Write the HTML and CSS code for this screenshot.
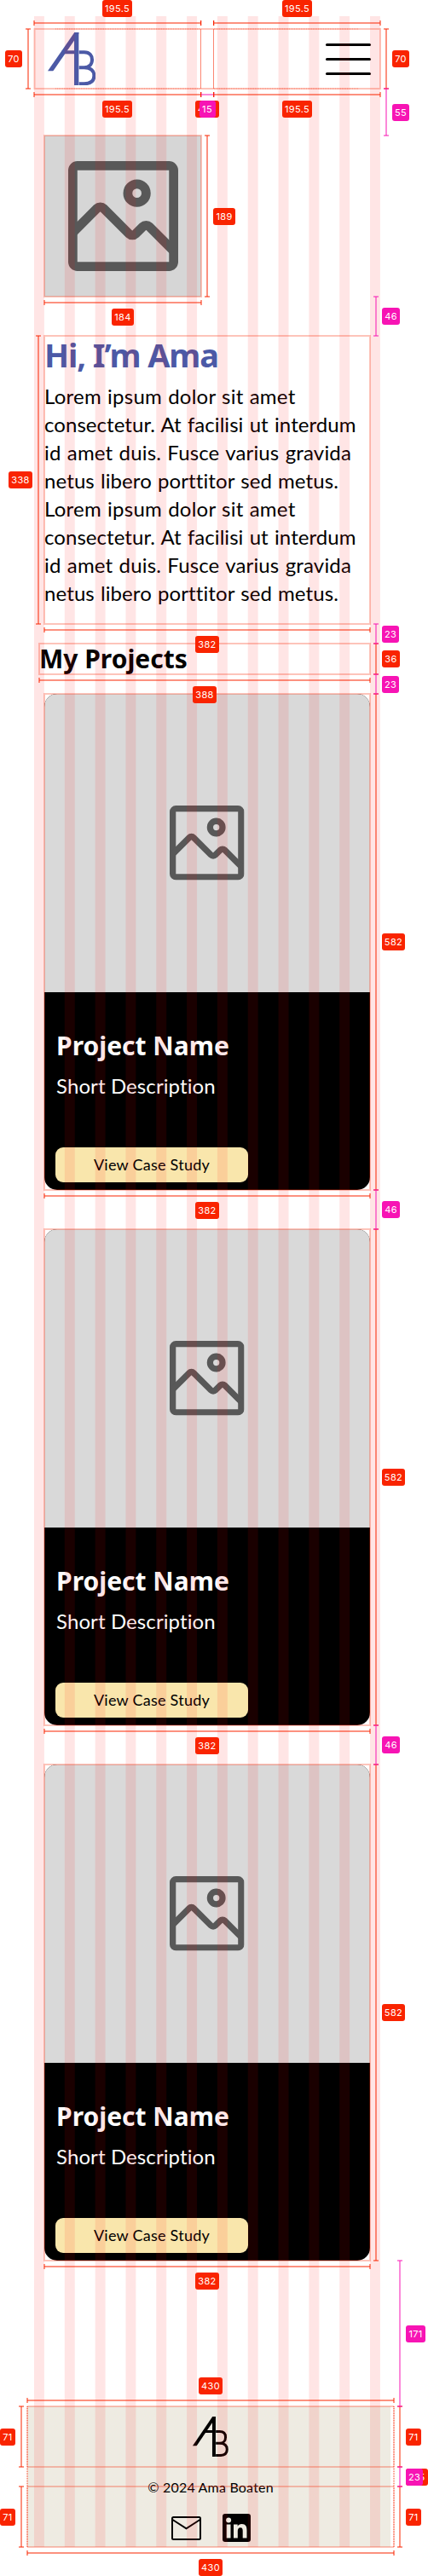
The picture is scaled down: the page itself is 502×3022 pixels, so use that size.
FILE: index.html
```html
<!DOCTYPE html>
<html lang="en">
<head>
<meta charset="utf-8">
<title>Ama Boaten</title>
<link rel="stylesheet" href="styles.css">
</head>
<body>
<svg class="defs" width="0" height="0">
  <symbol id="logo" viewBox="0 0 170 188" preserveAspectRatio="none">
    <clipPath id="leg"><rect x="0" y="0" width="109" height="136"/></clipPath>
    <g fill="none" stroke="currentColor" stroke-width="12">
      <path d="M-4.3 156L117.3 -20" stroke-width="15.6" clip-path="url(#leg)"/>
      <path d="M50 70H93"/>
      <path d="M101 0V187" stroke-width="16"/>
      <path d="M110 70H128C149 70 156 83 156 96C156 112 146 124 128 124H110M128 124C154 124 163 138 163 153C163 172 150 181 128 181H110"/>
    </g>
  </symbol>
  <symbol id="picture" viewBox="0 0 24 24">
    <g fill="none" stroke="currentColor" stroke-width="2">
      <rect x="1" y="1" width="22" height="22" rx="1"/>
      <circle cx="15" cy="7" r="2"/>
      <path d="M1 15.6L6.3 10.3a1 1 0 0 1 1.4 0L13.3 15.9a1 1 0 0 0 1.4 0L16.3 14.3a1 1 0 0 1 1.4 0L23 19.6"/>
    </g>
  </symbol>
</svg>

<div class="page">
  <header class="header">
    <svg class="logo"><use href="#logo"/></svg>
    <div class="menu"><span></span><span></span><span></span></div>
  </header>

  <main class="main">
    <div class="portrait"><svg class="portrait-icon"><use href="#picture"/></svg></div>
    <section class="intro">
      <h1 class="title">Hi, I’m Ama</h1>
      <p class="lead">
        <span class="l1">Lorem ipsum dolor sit amet</span>
        <span class="l2">consectetur. At facilisi ut interdum</span>
        <span class="l3">id amet duis. Fusce varius gravida</span>
        <span class="l4">netus libero porttitor sed metus.</span>
        <span class="l1">Lorem ipsum dolor sit amet</span>
        <span class="l2">consectetur. At facilisi ut interdum</span>
        <span class="l3">id amet duis. Fusce varius gravida</span>
        <span class="l4">netus libero porttitor sed metus.</span>
      </p>
    </section>
    <h2 class="section-title">My Projects</h2>
    <div class="cards">
      <article class="card">
        <div class="thumb"><svg class="thumb-icon"><use href="#picture"/></svg></div>
        <div class="info"><h3 class="name">Project Name</h3><p class="desc">Short Description</p><a class="button"><span>View Case Study</span></a></div>
      </article>
      <article class="card">
        <div class="thumb"><svg class="thumb-icon"><use href="#picture"/></svg></div>
        <div class="info"><h3 class="name">Project Name</h3><p class="desc">Short Description</p><a class="button"><span>View Case Study</span></a></div>
      </article>
      <article class="card">
        <div class="thumb"><svg class="thumb-icon"><use href="#picture"/></svg></div>
        <div class="info"><h3 class="name">Project Name</h3><p class="desc">Short Description</p><a class="button"><span>View Case Study</span></a></div>
      </article>
    </div>
  </main>

  <footer class="footer">
    <svg class="footer-logo"><use href="#logo"/></svg>
    <p class="copyright">© 2024 Ama Boaten</p>
    <div class="social">
      <svg class="mail" viewBox="0 0 35 28"><g fill="none" stroke="#000" stroke-width="2"><rect x="1" y="1" width="33" height="26" rx="1.5"/><path d="M1.5 4L17.5 14.3L33.500 4"/></g></svg>
      <svg class="linkedin" viewBox="0 0 33 33"><rect width="33" height="33" rx="3"/><g fill="#eeebe2"><circle cx="7.100" cy="7.600" r="3"/><rect x="4.700" y="12.500" width="4.800" height="16"/><path d="M13 12.500h4.700v2.200c.9-1.600 2.600-2.700 4.900-2.700 4.600 0 5.900 3 5.900 7.200v9.300h-4.800v-8.300c0-2.200-.3-4-2.700-4s-3.200 1.800-3.200 4v8.300H13z"/></g></svg>
    </div>
  </footer>
</div>

<div class="overlay">
  <svg class="guides" width="502" height="3022">
    <defs>
      <pattern id="columns" x="40" y="0" width="35.820" height="3022" patternUnits="userSpaceOnUse"><rect width="11.900" height="3022" fill="#f00" fill-opacity=".1"/></pattern>
      <marker id="tick" markerUnits="userSpaceOnUse" markerWidth="2" markerHeight="6" refX="1" refY="3" orient="auto"><rect width="2" height="6" fill="#f92400" fill-opacity=".5"/></marker>
      <marker id="tickPink" markerUnits="userSpaceOnUse" markerWidth="2" markerHeight="6" refX="1" refY="3" orient="auto"><rect width="2" height="6" fill="#f714b4" fill-opacity=".5"/></marker>
    </defs>
    <rect x="40" y="19" width="406" height="2969" fill="url(#columns)"/>
    <g fill="none" stroke="#f92400" stroke-opacity=".27" stroke-width="2">
      <rect x="40.500" y="34" width="405.500" height="70"/>
      <path d="M235.500 34V104M250.500 34V104" stroke-width="1" stroke-opacity=".55"/>
      <path d="M65 34H235M251 34H421M65 104H235M251 104H421" stroke-dasharray="1 1" stroke-width="1.500"/>
      <rect x="52" y="159" width="184" height="189"/>
      <rect x="52" y="394" width="382" height="338"/>
      <rect x="46" y="755" width="388" height="36"/>
      <rect x="52" y="814" width="382" height="582"/>
      <rect x="52" y="1442" width="382" height="582"/>
      <rect x="52" y="2070" width="382" height="582"/>
      <path d="M32 2823H462M32 2894H462M32 2917H462M32 2988H462"/>
      <path d="M32 2823V2894M462 2823V2894M32 2917V2988M462 2917V2988" stroke-opacity=".12"/>
      <path d="M32 2823V2988M462 2823V2988" stroke-dasharray="1 1" stroke-opacity=".5"/>
    </g>
    <g stroke="#f92400" stroke-opacity=".5" stroke-width="2" marker-start="url(#tick)" marker-end="url(#tick)">
      <line x1="40" y1="27" x2="235.500" y2="27"/><line x1="250.500" y1="27" x2="446" y2="27"/>
      <line x1="40" y1="111" x2="235.500" y2="111"/><line x1="250.500" y1="111" x2="446" y2="111"/>
      <line x1="33" y1="34" x2="33" y2="104"/><line x1="453" y1="34" x2="453" y2="104"/>
      <line x1="243" y1="159" x2="243" y2="348"/><line x1="52" y1="355" x2="236" y2="355"/>
      <line x1="45" y1="394" x2="45" y2="732"/><line x1="52" y1="739" x2="434" y2="739"/>
      <line x1="441" y1="755" x2="441" y2="791"/><line x1="46" y1="798" x2="434" y2="798"/>
      <line x1="441" y1="814" x2="441" y2="1396"/><line x1="52" y1="1403" x2="434" y2="1403"/>
      <line x1="441" y1="1442" x2="441" y2="2024"/><line x1="52" y1="2031" x2="434" y2="2031"/>
      <line x1="441" y1="2070" x2="441" y2="2652"/><line x1="52" y1="2659" x2="434" y2="2659"/>
      <line x1="32" y1="2816" x2="462" y2="2816"/><line x1="32" y1="2995" x2="462" y2="2995"/>
      <line x1="25" y1="2823" x2="25" y2="2894"/><line x1="25" y1="2917" x2="25" y2="2988"/>
      <line x1="469" y1="2823" x2="469" y2="2894"/><line x1="469" y1="2917" x2="469" y2="2988"/>
    </g>
    <g stroke="#f714b4" stroke-opacity=".5" stroke-width="2" marker-start="url(#tickPink)" marker-end="url(#tickPink)">
      <line x1="235.500" y1="111" x2="250.500" y2="111"/>
      <line x1="453" y1="104" x2="453" y2="159"/><line x1="441" y1="348" x2="441" y2="394"/>
      <line x1="441" y1="732" x2="441" y2="755"/><line x1="441" y1="791" x2="441" y2="814"/>
      <line x1="441" y1="1396" x2="441" y2="1442"/><line x1="441" y1="2024" x2="441" y2="2070"/>
      <line x1="469" y1="2652" x2="469" y2="2823"/><line x1="469" y1="2894" x2="469" y2="2917"/>
    </g>
    <path d="M235.500 24V30M250.500 24V30M235.500 108V114M250.500 108V114" stroke="#f92400"/>
  </svg>
  <b class="tag" style="left:120px;top:0;width:35px">195.5</b>
  <b class="tag" style="left:331px;top:0;width:35px">195.5</b>
  <b class="tag" style="left:120px;top:118px;width:35px">195.5</b>
  <b class="tag" style="left:331px;top:118px;width:35px">195.5</b>
  <b class="tag" style="left:229px;top:118px;width:28px">406</b>
  <b class="tag gap" style="left:233.5px;top:118px;width:19px">15</b>
  <b class="tag" style="left:6px;top:59px;width:20px">70</b>
  <b class="tag" style="left:460px;top:59px;width:20px">70</b>
  <b class="tag gap" style="left:460px;top:121.500px;width:20px">55</b>
  <b class="tag" style="left:250px;top:243.500px;width:26px">189</b>
  <b class="tag" style="left:131px;top:362px;width:26px">184</b>
  <b class="tag gap" style="left:448px;top:361px;width:21px">46</b>
  <b class="tag" style="left:10px;top:553px;width:28px">338</b>
  <b class="tag gap" style="left:448px;top:733.500px;width:20px">23</b>
  <b class="tag" style="left:448px;top:763px;width:21px">36</b>
  <b class="tag gap" style="left:448px;top:792.500px;width:20px">23</b>
  <b class="tag" style="left:229px;top:746px;width:28px">382</b>
  <b class="tag" style="left:226px;top:805px;width:28px">388</b>
  <b class="tag" style="left:448px;top:1095px;width:27px">582</b>
  <b class="tag" style="left:229px;top:1410px;width:28px">382</b>
  <b class="tag gap" style="left:448px;top:1409px;width:21px">46</b>
  <b class="tag" style="left:448px;top:1723px;width:27px">582</b>
  <b class="tag" style="left:229px;top:2038px;width:28px">382</b>
  <b class="tag gap" style="left:448px;top:2037px;width:21px">46</b>
  <b class="tag" style="left:448px;top:2351px;width:27px">582</b>
  <b class="tag" style="left:229px;top:2666px;width:28px">382</b>
  <b class="tag gap" style="left:476px;top:2727.500px;width:23px">171</b>
  <b class="tag" style="left:233px;top:2789px;width:28px">430</b>
  <b class="tag" style="left:233px;top:3002px;width:28px">430</b>
  <b class="tag" style="left:0;top:2848.500px;width:18px">71</b>
  <b class="tag" style="left:0;top:2942.500px;width:18px">71</b>
  <b class="tag" style="left:476px;top:2848.500px;width:18px">71</b>
  <b class="tag" style="left:476px;top:2942.500px;width:18px">71</b>
  <b class="tag" style="left:476px;top:2895.500px;width:26px">165</b>
  <b class="tag gap" style="left:476px;top:2895.500px;width:20px">23</b>
</div>
</body>
</html>
```

FILE: styles.css
```css
* { box-sizing: border-box; }
body { margin: 0; background: #fff; color: #000; font-family: Lato, sans-serif; font-variant-ligatures: none; }
h1, h2, h3, p { margin: 0; white-space: nowrap; }
svg { display: block; }
.defs { position: absolute; }

.page { width: 502px; height: 3022px; padding: 34px 40px 0 32px; }
.header { display: flex; justify-content: space-between; height: 70px; margin: 0 16px 0 8px; padding: 3.500px 11px 0 15.500px; }
.logo { width: 56.700px; height: 62.600px; color: #4b59a6; }
.menu { display: flex; flex-direction: column; gap: 14px; padding-top: 13px; width: 53.500px; }
.menu span { height: 3px; border-radius: 1.500px; background: #000; }

.main { margin: 55px 28px 0 20px; }
.portrait { display: flex; align-items: center; justify-content: center; width: 184px; height: 189px; background: #d6d6d6; color: #585858; }
.portrait-icon { width: 129px; height: 129px; }

.intro { height: 338px; margin-top: 46px; }
.title { font: 700 38px/45px "Noto Sans", sans-serif; letter-spacing: -1.100px; color: #4b59a6; }
.lead { display: flex; flex-direction: column; align-items: flex-start; margin-top: 9px; font-size: 24px; line-height: 33px; white-space: normal; }
.lead span { text-align: justify; text-align-last: justify; }
.l1 { width: 294.500px; letter-spacing: .25px; }
.l2 { width: 365.500px; letter-spacing: .05px; }
.l3 { width: 360px; letter-spacing: .15px; }
.l4 { width: 345px; letter-spacing: .1px; }
.section-title { height: 36px; margin: 23px 0 23px -6px; font: 700 30px/36px "Noto Sans", sans-serif; }

.cards { display: flex; flex-direction: column; gap: 46px; }
.card { height: 582px; border-radius: 15px; overflow: hidden; background: #000; color: #fff; }
.thumb { display: flex; align-items: center; justify-content: center; height: 350px; background: #d9d9d9; color: #585858; }
.thumb-icon { width: 87.500px; height: 87.500px; }
.info { padding: 45px 13px 0; }
.name { padding-left: 1px; font: 700 30px/36px "Noto Sans", sans-serif; }
.desc { padding: 12px 0 0 1px; font-size: 24px; line-height: 33px; letter-spacing: .1px; }
.button { display: flex; align-items: center; justify-content: center; width: 226px; height: 41px; margin-top: 56px; padding-bottom: 2px; border-radius: 9px; background: #f9e6ac; color: #000; font-size: 18px; letter-spacing: .25px; white-space: nowrap; }

.footer { display: flex; flex-direction: column; align-items: center; width: 426px; height: 165px; margin-top: 171px; padding: 12px 0 0 4px; background: #eeebe2; }
.footer-logo { width: 42px; height: 47.300px; color: #000; }
.copyright { margin-top: 25px; font-size: 16px; line-height: 22px; letter-spacing: .2px; }
.social { display: flex; align-items: center; gap: 25px; margin-top: 20px; }
.mail { width: 35px; height: 28px; }
.linkedin { width: 33px; height: 33px; }

/* Measurement layer drawn above the page */
.overlay { position: absolute; left: 0; top: 0; width: 502px; height: 3022px; overflow: hidden; }
.guides { position: absolute; left: 0; top: 0; }
.tag { position: absolute; height: 20px; border-radius: 3px; background: #f92400; color: #fff; font: 400 11px/20px Inter, sans-serif; letter-spacing: .35px; text-align: center; white-space: nowrap; }
.tag.gap { background: #f714b4; }
```
